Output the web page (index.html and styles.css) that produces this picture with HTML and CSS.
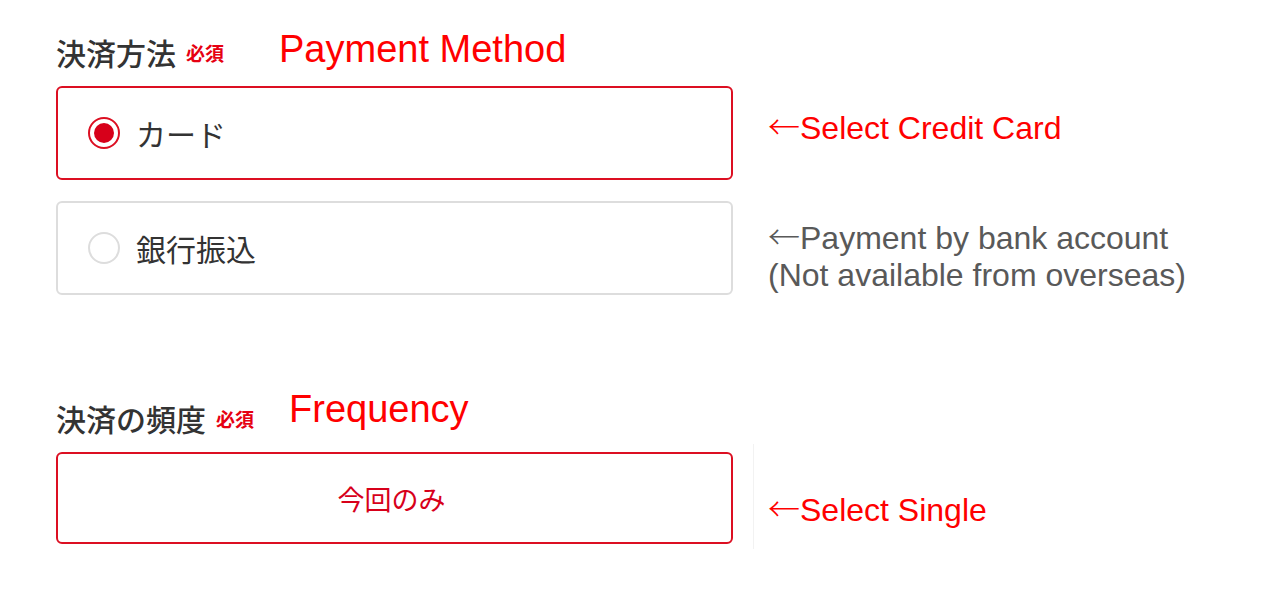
FILE: index.html
```html
<!DOCTYPE html>
<html lang="ja">
<head>
  <meta charset="UTF-8">
  <title>決済方法</title>
  <link rel="stylesheet" href="styles.css">
</head>
<body>
  <section class="field field-method">
    <div class="field-head">
      <h2 class="label">決済方法</h2>
      <span class="req">必須</span>
      <span class="note-title">Payment Method</span>
    </div>

    <div class="row">
      <label class="option is-selected">
        <span class="radio"></span>
        <span class="option-text">カード</span>
      </label>
      <p class="note note-red note-card"><span class="arrow">←</span>Select Credit Card</p>
    </div>

    <div class="row">
      <label class="option">
        <span class="radio"></span>
        <span class="option-text">銀行振込</span>
      </label>
      <p class="note note-gray note-bank"><span class="arrow">←</span>Payment by bank account<br>(Not available from overseas)</p>
    </div>
  </section>

  <section class="field field-frequency">
    <div class="field-head">
      <h2 class="label">決済の頻度</h2>
      <span class="req">必須</span>
      <span class="note-title">Frequency</span>
    </div>

    <div class="row">
      <button class="choice is-selected">今回のみ</button>
      <div class="divider"></div>
      <p class="note note-red note-single"><span class="arrow">←</span>Select Single</p>
    </div>
  </section>
</body>
</html>
```

FILE: styles.css
```css
body {
  margin: 0;
  padding: 32px 0 0 56px;
  background: #fff;
  color: #333;
  font-family: "Noto Sans CJK JP", "Liberation Sans", sans-serif;
}
.field-head {
  display: flex;
  align-items: flex-start;
  height: 40px;
  margin-bottom: 14px;
}
.label {
  margin: 0;
  font-size: 30px;
  font-weight: 500;
  line-height: 40px;
  color: #333;
}
.req {
  margin: 1px 0 0 10px;
  font-size: 19px;
  font-weight: bold;
  line-height: 40px;
  color: #e60012;
}
.note-title {
  margin: -6px 0 0 55px;
  font-family: "Liberation Sans", Arial, sans-serif;
  font-size: 38px;
  line-height: 46px;
  color: #ff0000;
}
.field-frequency {
  margin-top: 103px;
}
.field-frequency .note-title {
  margin-left: 35px;
  margin-top: -12px;
}
.row {
  display: flex;
  align-items: flex-start;
  margin-bottom: 21px;
}
.option,
.choice {
  box-sizing: border-box;
  width: 677px;
  height: 94px;
  flex-shrink: 0;
  display: flex;
  align-items: center;
  padding-left: 30px;
  border: 2px solid #ddd;
  border-radius: 6px;
  background: #fff;
  cursor: pointer;
}
.option.is-selected {
  border-color: #dc0f22;
}
.radio {
  box-sizing: border-box;
  width: 32px;
  height: 32px;
  border: 2px solid #ddd;
  border-radius: 50%;
  display: flex;
  align-items: center;
  justify-content: center;
}
.is-selected .radio {
  border-color: #dc0f22;
}
.is-selected .radio::after {
  content: "";
  width: 20px;
  height: 20px;
  border-radius: 50%;
  background: #d7001a;
}
.option-text {
  margin-left: 16px;
  font-size: 30px;
  color: #333;
}
.choice {
  height: 92px;
  justify-content: center;
  padding-left: 0;
  border-color: #dc0f22;
  font-family: inherit;
  font-size: 27px;
  color: #d7001a;
}
.divider {
  width: 1px;
  height: 105px;
  margin: -8px 0 0 20px;
  background: #f2f2f2;
}
.note {
  margin: 0 0 0 35px;
  font-family: "Liberation Sans", Arial, sans-serif;
  font-size: 32px;
  line-height: 37px;
}
.arrow {
  font-family: "Noto Sans CJK JP", sans-serif;
  font-weight: 300;
}
.note-red {
  color: #ff0000;
}
.note-gray {
  color: #595959;
}
.note-card {
  margin-top: 21px;
}
.note-bank {
  margin-top: 16px;
}
.note-single {
  margin-top: 37px;
  margin-left: 14px;
}
```
